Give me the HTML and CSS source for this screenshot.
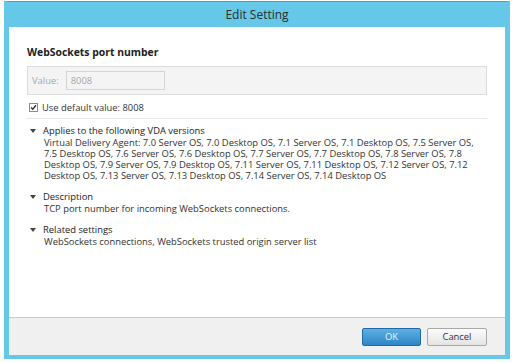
FILE: index.html
```html
<!DOCTYPE html>
<html>
<head>
<meta charset="utf-8">
<link rel="stylesheet" href="styles.css">
</head>
<body>
<div class="window">
  <div class="titlebar">Edit Setting</div>
  <div class="content">
    <h1 class="setting-name">WebSockets port number</h1>
    <div class="value-box">
      <span class="value-label">Value:</span>
      <span class="value-input">8008</span>
    </div>
    <div class="default-row">
      <span class="checkbox"><svg width="9" height="9" viewBox="0 0 9 9"><path d="M1.5 4.5 L3.5 6.8 L7.6 1.6" fill="none" stroke="#222" stroke-width="1.6"/></svg></span>
      <span>Use default value: 8008</span>
    </div>
    <div class="details">
      <section class="detail">
        <div class="detail-head"><span class="caret"></span>Applies to the following VDA versions</div>
        <p class="detail-body">Virtual Delivery Agent: 7.0 Server OS, 7.0 Desktop OS, 7.1 Server OS, 7.1 Desktop OS, 7.5 Server OS, 7.5 Desktop OS, 7.6 Server OS, 7.6 Desktop OS, 7.7 Server OS, 7.7 Desktop OS, 7.8 Server OS, 7.8 Desktop OS, 7.9 Server OS, 7.9 Desktop OS, 7.11 Server OS, 7.11 Desktop OS, 7.12 Server OS, 7.12 Desktop OS, 7.13 Server OS, 7.13 Desktop OS, 7.14 Server OS, 7.14 Desktop OS</p>
      </section>
      <section class="detail">
        <div class="detail-head"><span class="caret"></span>Description</div>
        <p class="detail-body">TCP port number for incoming WebSockets connections.</p>
      </section>
      <section class="detail">
        <div class="detail-head"><span class="caret"></span>Related settings</div>
        <p class="detail-body">WebSockets connections, WebSockets trusted origin server list</p>
      </section>
    </div>
  </div>
  <div class="footer">
    <button class="btn btn-primary">OK</button>
    <button class="btn">Cancel</button>
  </div>
</div>
</body>
</html>
```
FILE: styles.css
```css
html, body {
  margin: 0;
  padding: 0;
  background: #ffffff;
}
body {
  font-family: "Open Sans", "Noto Sans", sans-serif;
  color: #333;
  padding: 1px 3px 4px 4px;
}
.window {
  width: 496px;
  border: 5px solid #66c8e9;
  border-top: 1px solid #7d8a90;
  border-bottom-width: 4px;
  background: #fff;
}
.titlebar {
  height: 25px;
  background: #66c8e9;
  text-align: center;
  font-size: 12px;
  line-height: 25px;
  color: #2b2b2b;
}
.content {
  height: 290px;
  padding: 0 18px;
  box-sizing: border-box;
  padding-top: 18px;
}
.setting-name {
  margin: 0;
  font-size: 10.4px;
  font-weight: 700;
  color: #222;
  line-height: 14px;
}
.value-box {
  margin-top: 7px;
  height: 29px;
  box-sizing: border-box;
  background: #f4f4f4;
  border: 1px solid #dcdcdc;
  display: flex;
  align-items: center;
  padding-left: 4px;
  gap: 7px;
}
.value-label {
  font-size: 9.4px;
  color: #a8a8a8;
}
.value-input {
  width: 99px;
  height: 19px;
  box-sizing: border-box;
  border: 1px solid #d4d4d4;
  background: #f4f4f4;
  font-size: 9.4px;
  color: #a8a8a8;
  line-height: 17px;
  padding-left: 4px;
}
.default-row {
  display: flex;
  align-items: center;
  gap: 4px;
  margin-top: 2px;
  height: 21px;
  padding-left: 2px;
  font-size: 9.4px;
  color: #333;
  border-bottom: 1px solid #e6e6e6;
}
.checkbox {
  width: 9px;
  height: 9px;
  box-sizing: border-box;
  border: 1px solid #8c8c8c;
  background: #fff;
  display: flex;
  align-items: center;
  justify-content: center;
}
.checkbox svg {
  display: block;
}
.details {
  padding-top: 6px;
  display: flex;
  flex-direction: column;
  gap: 10px;
}
.detail-head {
  display: flex;
  align-items: center;
  font-size: 9.4px;
  line-height: 12px;
  color: #222;
  padding-left: 3px;
}
.caret {
  width: 0;
  height: 0;
  border-left: 3.5px solid transparent;
  border-right: 3.5px solid transparent;
  border-top: 4px solid #444;
  margin-right: 7px;
}
.detail-body {
  margin: 0;
  padding-left: 17px;
  font-size: 9.4px;
  line-height: 11px;
  color: #333;
}
.footer {
  height: 38px;
  box-sizing: border-box;
  border-top: 1px solid #c9c9c9;
  background: #f0f0f0;
  display: flex;
  justify-content: flex-end;
  align-items: center;
  gap: 6px;
  padding-right: 18px;
}
.btn {
  width: 60px;
  height: 18px;
  box-sizing: border-box;
  border: 1px solid #a9a9a9;
  border-radius: 2px;
  background: linear-gradient(#fbfbfb, #e4e4e4);
  font-family: "Open Sans", "Noto Sans", sans-serif;
  font-size: 9.4px;
  color: #333;
  padding: 0;
  margin: 0;
}
.btn-primary {
  width: 59px;
  border-color: #1f69a6;
  background: linear-gradient(#5fb0e2, #2c86c7);
  color: #e9f4fc;
}
```
